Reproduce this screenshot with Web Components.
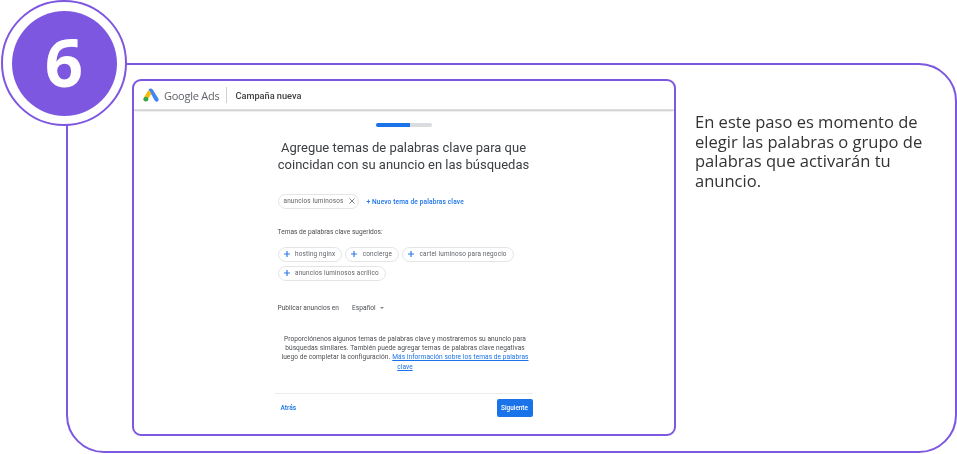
<!DOCTYPE html>
<html lang="es">
<head>
<meta charset="UTF-8">
<title>Paso 6</title>
<style>
  html, body { margin: 0; background: #fff; }
  body { width: 957px; height: 454px; overflow: hidden; font-family: "Roboto", "Liberation Sans", sans-serif; }
</style>
</head>
<body>
<template id="step-panel-template">
  <style>
    :host { display: block; position: relative; width: 957px; height: 454px; box-sizing: border-box; padding: 63px 0 0 66px; }
    .frame { box-sizing: border-box; width: 891px; height: 390px; border: 2.5px solid #7e57e0; border-radius: 38px; padding: 14px 0 0 64px; display: flex; gap: 19px; }
    .note { width: 232px; padding-top: 33px; font: 16.55px/19.7px "Open Sans", sans-serif; color: #333; will-change: transform; }
    .badge { position: absolute; left: 1px; top: 0; width: 126px; height: 126px; box-sizing: border-box; border: 2.5px solid #7e57e0; border-radius: 50%; background: #fff; display: flex; align-items: center; justify-content: center; }
    .badge span { width: 105px; height: 105px; border-radius: 50%; background: #7e57e0; color: #fff; font: 700 67px/101px "Open Sans", sans-serif; text-align: center; }
  </style>
  <div class="frame">
    <slot name="card"></slot>
    <div class="note"><slot></slot></div>
  </div>
  <div class="badge"><span id="num"></span></div>
</template>

<template id="ads-card-template">
  <style>
    :host { display: block; box-sizing: border-box; width: 544px; height: 357px; border: 2.5px solid #7e57e0; border-radius: 9px; overflow: hidden; background: #fff; color: #3c4043; }
    header { height: 28px; display: flex; align-items: center; padding-left: 9px; box-shadow: 0 1.5px 1.5px #d4d4d4; border-bottom: 1px solid #dedede; filter: blur(.3px); }
    svg { display: block; }
    .brand { margin-left: 5px; font: 11px "Open Sans", sans-serif; color: #5f6368; letter-spacing: -.25px; }
    .sep { width: 1px; height: 16px; background: #d0d0d0; margin: 0 8px 0 7px; }
    .camp { font: 500 9.2px Roboto, sans-serif; color: #3c4043; }
    main { width: 255px; margin-left: 143.5px; display: flex; flex-direction: column; filter: blur(.3px); }
    .progress { width: 56px; height: 3.5px; border-radius: 2px; background: #dadce0; margin: 13px 0 0 98px; overflow: hidden; }
    .progress i { display: block; width: 34px; height: 100%; background: #1a73e8; }
    h1 { margin: 12px -7px 0 -10px; font: 400 13px/17px Roboto, sans-serif; text-align: center; color: #3c4043; }
    .selected { display: flex; align-items: center; gap: 7.5px; margin-top: 21px; }
    .add { padding-top: 1px; font: 500 6.6px Roboto, sans-serif; color: #1a73e8; letter-spacing: .12px; }
    .label { margin-top: 19px; font: 6.6px Roboto, sans-serif; letter-spacing: .01px; color: #4a4d51; }
    .chips { display: flex; flex-wrap: wrap; gap: 4px 3px; margin-top: 11px; }
    .lang { display: flex; align-items: center; margin-top: 23px; font: 6.6px Roboto, sans-serif; letter-spacing: .02px; color: #4a4d51; }
    .lang b { font-weight: 400; margin-left: 13px; }
    .lang i { margin-left: 4px; border: 2px solid transparent; border-top-color: #80868b; border-bottom: 0; }
    .help { margin-top: 23px; font: 6.6px/9.4px Roboto, sans-serif; letter-spacing: .05px; color: #4a4d51; text-align: center; }
    .row { display: flex; justify-content: center; gap: 2px; }
    a { color: #1a73e8; text-decoration: underline; }
    footer { margin: 21px 0 0 -3px; border-top: 1px solid #ececec; display: flex; justify-content: space-between; align-items: center; padding: 5px 0 0 6px; }
    .back { font: 500 6.6px Roboto, sans-serif; color: #1a73e8; }
    .next { width: 36px; height: 18px; border-radius: 2px; background: #1a73e8; color: #fff; font: 500 6.4px/18px Roboto, sans-serif; text-align: center; }
  </style>
  <header>
    <svg width="16" height="14" viewBox="0 0 16 14">
      <path d="M5.6 1.6 C6.6 .2 8.8 .3 9.7 1.6 L15.3 10.6 C16 11.7 15.6 13 14.5 13.5 C13.4 14 12.3 13.6 11.7 12.6 Z" fill="#4285f4"/>
      <path d="M5.4 1.9 L.7 10 C.1 11 .4 12.4 1.5 13 C2.6 13.6 3.9 13.2 4.5 12.2 L8.4 5.4 Z" fill="#fbbc04"/>
      <circle cx="2.9" cy="11.2" r="2.4" fill="#34a853"/>
    </svg>
    <span class="brand">Google Ads</span>
    <span class="sep"></span>
    <span class="camp">Campaña nueva</span>
  </header>
  <main>
    <div class="progress"><i></i></div>
    <h1>Agregue temas de palabras clave para que<br>coincidan con su anuncio en las búsquedas</h1>
    <div class="selected">
      <kw-chip removable>anuncios luminosos</kw-chip>
      <span class="add">+ Nuevo tema de palabras clave</span>
    </div>
    <div class="label">Temas de palabras clave sugeridos:</div>
    <div class="chips">
      <kw-chip>hosting nginx</kw-chip>
      <kw-chip>concierge</kw-chip>
      <kw-chip>cartel luminoso para negocio</kw-chip>
      <kw-chip>anuncios luminosos acrílico</kw-chip>
    </div>
    <div class="lang">Publicar anuncios en <b>Español</b><i></i></div>
    <div class="help">
      <div>Proporciónenos algunos temas de palabras clave y mostraremos su anuncio para</div>
      <div>búsquedas similares. También puede agregar temas de palabras clave negativas</div>
      <div class="row"><span>luego de completar la configuración.</span><a>Más información sobre los temas de palabras</a></div>
      <div><a>clave</a></div>
    </div>
    <footer><span class="back">Atrás</span><span class="next">Siguiente</span></footer>
  </main>
</template>

<template id="kw-chip-template">
  <style>
    :host { display: inline-flex; align-items: center; box-sizing: border-box; height: 15px; padding: 0 6px 0 5px; border: 1px solid #e3e4e6; border-radius: 8px; background: #fff; font: 6.4px Roboto, sans-serif; letter-spacing: .16px; color: #5f6368; white-space: nowrap; }
    svg { display: block; }
    .plus { margin-right: 5.5px; }
    .x { margin-left: 5px; }
    :host([removable]) { padding: 0 3.5px 0 5px; }
    :host([removable]) .plus, :host(:not([removable])) .x { display: none; }
  </style>
  <svg class="plus" width="6" height="6" viewBox="0 0 6 6"><path d="M3 0v6M0 3h6" stroke="#2f7be8" stroke-width="1.2"/></svg>
  <slot></slot>
  <svg class="x" width="6" height="6" viewBox="0 0 6 6"><path d="M.5.5l5 5M5.5.5l-5 5" stroke="#5f6368" stroke-width=".8"/></svg>
</template>

<step-panel number="6">
  <ads-card slot="card"></ads-card>
  En este paso es momento de elegir las palabras o grupo de palabras que activarán tu anuncio.
</step-panel>

<script>
  class KwChip extends HTMLElement {
    constructor () {
      super();
      this.attachShadow({ mode: "open" });
      this.shadowRoot.appendChild(document.getElementById("kw-chip-template").content.cloneNode(true));
    }
  }
  class AdsCard extends HTMLElement {
    constructor () {
      super();
      this.attachShadow({ mode: "open" });
      this.shadowRoot.appendChild(document.getElementById("ads-card-template").content.cloneNode(true));
    }
  }
  class StepPanel extends HTMLElement {
    constructor () {
      super();
      this.attachShadow({ mode: "open" });
      this.shadowRoot.appendChild(document.getElementById("step-panel-template").content.cloneNode(true));
    }
    connectedCallback () {
      this.shadowRoot.getElementById("num").textContent = this.getAttribute("number");
    }
  }
  customElements.define("kw-chip", KwChip);
  customElements.define("ads-card", AdsCard);
  customElements.define("step-panel", StepPanel);
</script>
</body>
</html>
